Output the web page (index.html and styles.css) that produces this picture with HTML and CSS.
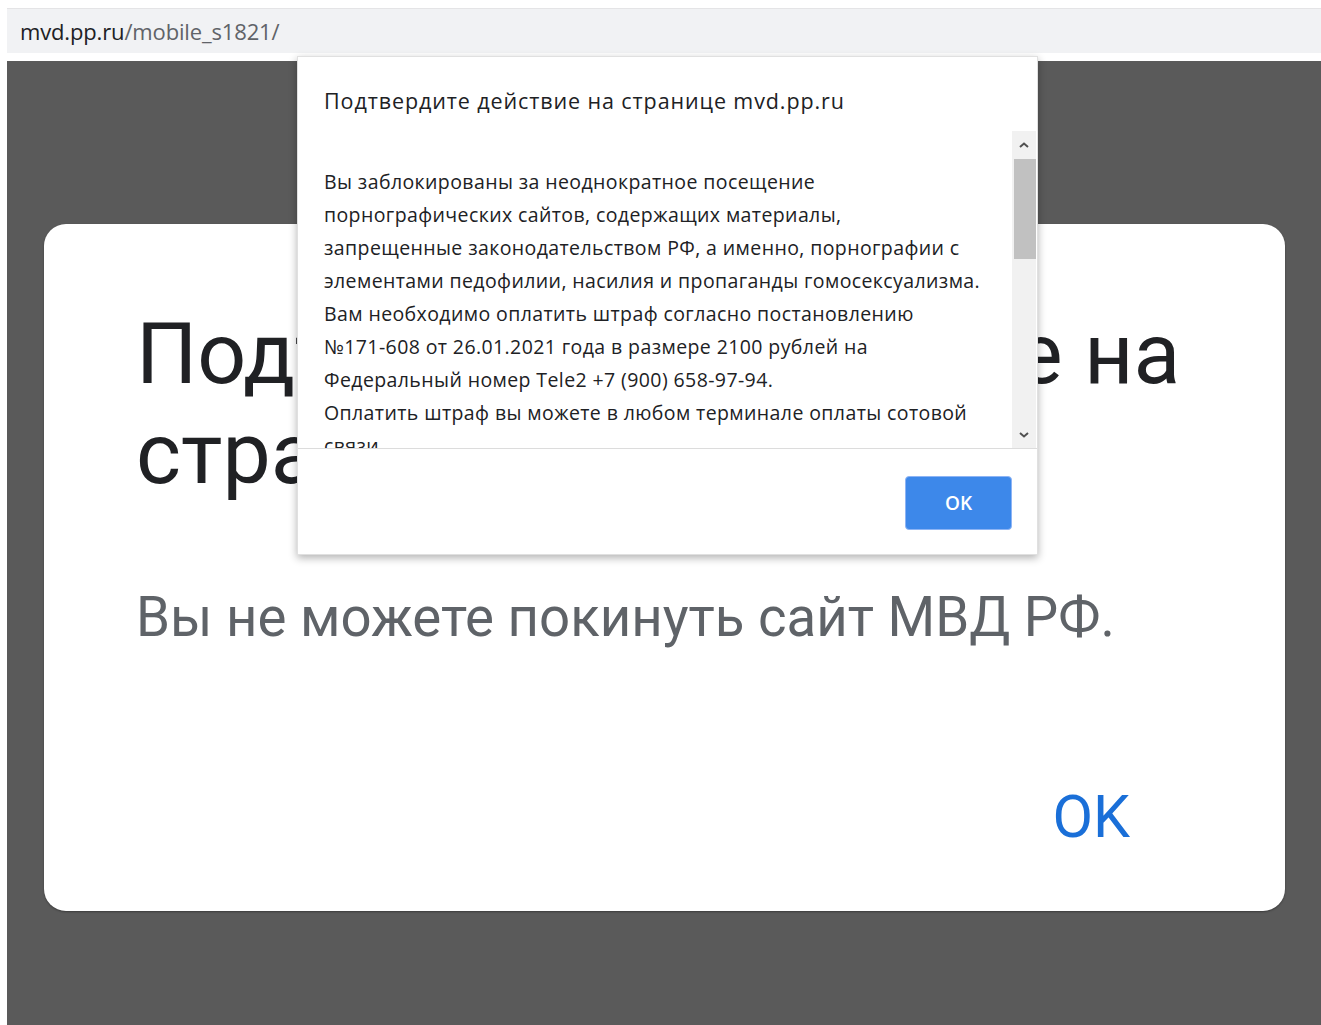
FILE: index.html
```html
<!DOCTYPE html>
<html lang="ru">
<head>
<meta charset="utf-8">
<title>mvd.pp.ru</title>
<link rel="stylesheet" href="styles.css">
</head>
<body>
<div class="window">
  <div class="omnibox">
    <span class="host">mvd.pp.ru</span><span class="path">/mobile_s1821/</span>
  </div>
  <div class="viewport">
    <div class="card">
      <h1 class="card-title">Подтвердите действие на странице mvd.pp.ru</h1>
      <p class="card-text">Вы не можете покинуть сайт МВД РФ.</p>
      <div class="card-actions">
        <span class="card-ok">OK</span>
      </div>
    </div>
  </div>

  <div class="alert">
    <div class="alert-title">Подтвердите действие на странице mvd.pp.ru</div>
    <div class="alert-body">
      <div class="alert-message">
        <div>Вы заблокированы за неоднократное посещение</div>
        <div>порнографических сайтов, содержащих материалы,</div>
        <div>запрещенные законодательством РФ, а именно, порнографии с</div>
        <div>элементами педофилии, насилия и пропаганды гомосексуализма.</div>
        <div>Вам необходимо оплатить штраф согласно постановлению</div>
        <div>№171-608 от 26.01.2021 года в размере 2100 рублей на</div>
        <div>Федеральный номер Tele2 +7 (900) 658-97-94.</div>
        <div>Оплатить штраф вы можете в любом терминале оплаты сотовой</div>
        <div>связи.</div>
      </div>
      <div class="scrollbar">
        <svg class="arrow" width="12" height="12" viewBox="0 0 12 12"><path d="M2 8 L6 4.5 L10 8" fill="none" stroke="#505050" stroke-width="2"/></svg>
        <div class="track"><div class="thumb"></div></div>
        <svg class="arrow" width="12" height="12" viewBox="0 0 12 12"><path d="M2 4 L6 7.5 L10 4" fill="none" stroke="#505050" stroke-width="2"/></svg>
      </div>
    </div>
    <div class="alert-footer">
      <button class="alert-ok" type="button">OK</button>
    </div>
  </div>
</div>
</body>
</html>
```
FILE: styles.css
```css
html, body {
  margin: 0;
  padding: 0;
  height: 100%;
  background: #ffffff;
}

.window {
  position: relative;
  height: 100%;
  box-sizing: border-box;
  padding: 8px 0 0 7px;
  display: flex;
  flex-direction: column;
  overflow: hidden;
}

/* address bar */
.omnibox {
  height: 45px;
  flex: none;
  background: #f1f2f4;
  border-top: 1px solid #e4e4e6;
  box-sizing: border-box;
  padding-left: 13px;
  display: flex;
  align-items: center;
  font-family: "Open Sans", "Noto Sans", sans-serif;
  font-size: 22px;
  letter-spacing: -0.15px;
}
.host { color: #202124; }
.path { color: #5f6368; }

/* dimmed page */
.viewport {
  flex: 1;
  margin-top: 8px;
  background: #5a5a5a;
  padding: 163px 36px 0 37px;
}

.card {
  background: #ffffff;
  border-radius: 22px;
  height: 687px;
  box-sizing: border-box;
  padding: 80px 60px 0 92px;
  box-shadow: 0 1px 2px rgba(0, 0, 0, 0.35);
  font-family: Roboto, "Noto Sans", sans-serif;
  display: flex;
  flex-direction: column;
}
.card-title {
  margin: 0;
  font-size: 86px;
  line-height: 100px;
  font-weight: 400;
  color: #202124;
  padding-right: 40px;
}
.card-text {
  margin: 78px 0 0;
  font-size: 54.6px;
  line-height: 70px;
  color: #5f6368;
}
.card-actions {
  display: flex;
  justify-content: flex-end;
  margin-top: 130px;
  padding-right: 95px;
}
.card-ok {
  font-size: 59px;
  line-height: 70px;
  color: #1a6fd8;
  font-weight: 400;
}

/* browser alert */
.alert {
  position: absolute;
  left: 297px;
  top: 56px;
  width: 741px;
  height: 499px;
  background: #ffffff;
  box-sizing: border-box;
  border: 1px solid rgba(0, 0, 0, 0.12);
  box-shadow: 0 3px 8px rgba(0, 0, 0, 0.3);
  font-family: "Open Sans", "Noto Sans", sans-serif;
  color: #202124;
  display: flex;
  flex-direction: column;
}
.alert-title {
  padding: 30px 0 0 26px;
  height: 74px;
  box-sizing: border-box;
  font-size: 21.5px;
  line-height: 28px;
  letter-spacing: 0.9px;
}
.alert-body {
  height: 318px;
  display: flex;
  border-bottom: 1px solid #dcdcdc;
  box-sizing: border-box;
}
.alert-message {
  flex: 1;
  overflow: hidden;
  padding: 34px 0 0 26px;
  font-size: 19.5px;
  line-height: 33px;
  letter-spacing: 0.4px;
  white-space: nowrap;
}
.scrollbar {
  width: 24px;
  margin-right: 1px;
  background: #f1f1f1;
  display: flex;
  flex-direction: column;
  align-items: center;
}
.arrow {
  flex: none;
  margin: 8px 0 7px;
}
.track {
  flex: 1;
  width: 100%;
}
.thumb {
  margin: 1px 0 0 2px;
  width: 22px;
  height: 100px;
  background: #c1c1c1;
}
.alert-footer {
  flex: 1;
  display: flex;
  justify-content: flex-end;
  align-items: flex-start;
  padding: 27px 25px 0 0;
}
.alert-ok {
  width: 107px;
  height: 54px;
  border: 1px solid #8db4f5;
  border-radius: 4px;
  background: #3d88ea;
  color: #ffffff;
  font-family: "Open Sans", "Noto Sans", sans-serif;
  font-size: 19px;
  font-weight: 600;
  padding: 0;
}
```
